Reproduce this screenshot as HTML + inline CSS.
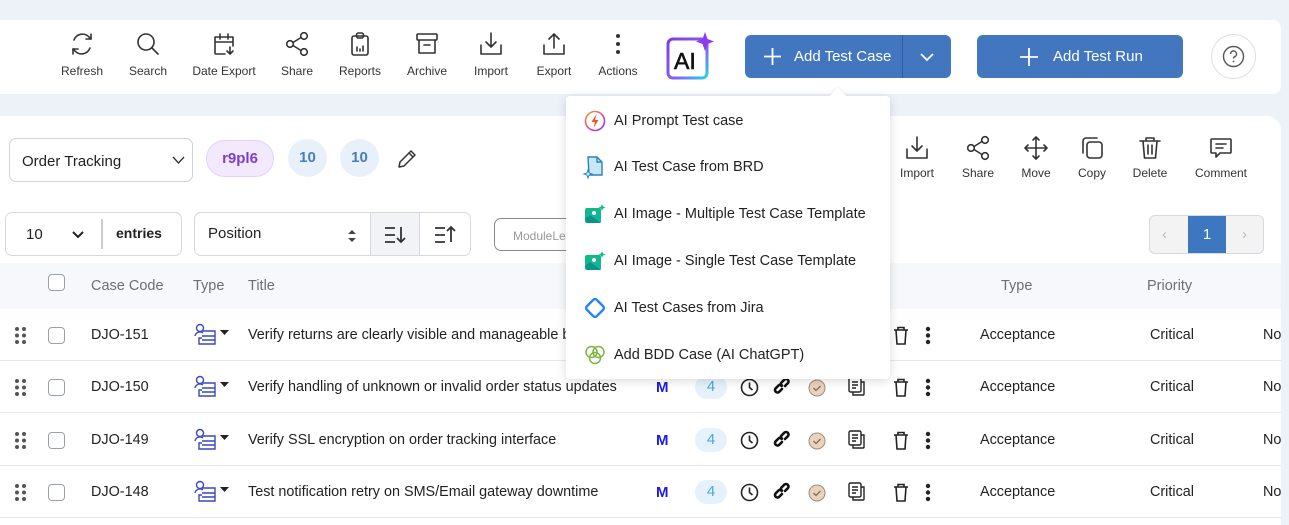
<!DOCTYPE html>
<html><head><meta charset="utf-8"><style>
*{box-sizing:border-box;margin:0;padding:0}
html,body{width:1289px;height:525px;overflow:hidden}
body{background:#edf2f9;font-family:"Liberation Sans",sans-serif;position:relative;color:#222}
.a{position:absolute}
.card{background:#fff}
.tb{position:absolute;top:30px;width:70px;text-align:center;font-size:12px;color:#333}
.tb svg{display:block;margin:0 auto 6px;width:26px;height:28px}
.rb{position:absolute;top:134px;width:64px;text-align:center;font-size:12px;color:#333}
.rb svg{display:block;margin:0 auto 4px;width:26px;height:28px}
svg{overflow:visible}
.ic{fill:none;stroke:#333;stroke-width:1.6;stroke-linecap:round;stroke-linejoin:round}
.row{position:absolute;left:0;width:1281px;height:52px;border-bottom:1px solid #e6e8ec;font-size:14.4px;color:#222}
.row>*{position:absolute}
.cb{width:17px;height:17px;border:1.3px solid #9aa0a8;border-radius:4px;background:#fff}
.mi{position:absolute;left:18px;font-size:14.5px;color:#222}
.mi svg{position:absolute;left:0;top:-3px;width:22px;height:22px}
.mi span{position:absolute;left:30px;white-space:nowrap}
</style></head><body>

<div class="a card" style="left:0;top:20px;width:1281px;height:74px;border-radius:0 8px 8px 0"></div>

<div class="tb" style="left:47px"><svg viewBox="0 0 26 28" class="ic"><path d="M5 10a9 9 0 0 1 15-3l2 2M21 18a9 9 0 0 1-15 3l-2-2"/><path d="M22 4v5h-5M4 24v-5h5"/></svg>Refresh</div>
<div class="tb" style="left:113px"><svg viewBox="0 0 26 28" class="ic"><circle cx="11" cy="12" r="8"/><path d="M17 18l6 6"/></svg>Search</div>
<div class="tb" style="left:189px"><svg viewBox="0 0 26 28" class="ic"><path d="M14 24H5a1 1 0 0 1-1-1V7h18v9M4 12h18M9 4v5M17 4v5"/><path d="M19 17v7M16 21l3 3 3-3"/></svg>Date Export</div>
<div class="tb" style="left:262px"><svg viewBox="0 0 26 28" class="ic"><circle cx="20" cy="6" r="3.3"/><circle cx="6" cy="14" r="3.3"/><circle cx="20" cy="22" r="3.3"/><path d="M9 12.5l8-5M9 15.5l8 5"/></svg>Share</div>
<div class="tb" style="left:325px"><svg viewBox="0 0 26 28" class="ic"><rect x="5" y="6" width="16" height="19" rx="2"/><rect x="9.5" y="3" width="7" height="5" rx="2"/><path d="M10 21v-4M13 21v-2M16 21v-5"/></svg>Reports</div>
<div class="tb" style="left:392px"><svg viewBox="0 0 26 28" class="ic"><rect x="3" y="4" width="20" height="6" rx="1"/><path d="M5 10v13h16V10M10 15h6"/></svg>Archive</div>
<div class="tb" style="left:456px"><svg viewBox="0 0 26 28" class="ic"><path d="M3 15v9h20v-9M13 3v14M8 12l5 5 5-5"/></svg>Import</div>
<div class="tb" style="left:519px"><svg viewBox="0 0 26 28" class="ic"><path d="M3 15v9h20v-9M13 18V4M8 9l5-5 5 5"/></svg>Export</div>
<div class="tb" style="left:583px"><svg viewBox="0 0 26 28"><circle cx="13" cy="6" r="2" fill="#333"/><circle cx="13" cy="14" r="2" fill="#333"/><circle cx="13" cy="22" r="2" fill="#333"/></svg>Actions</div>

<svg class="a" style="left:664px;top:32px" width="50" height="50" viewBox="0 0 50 50">
<defs><linearGradient id="g" x1="0" y1="0" x2="1" y2="1"><stop offset="0" stop-color="#7b3fe4"/><stop offset=".6" stop-color="#8b5cf6"/><stop offset="1" stop-color="#22d3ee"/></linearGradient></defs>
<rect x="4" y="7" width="39" height="39" rx="5" fill="none" stroke="url(#g)" stroke-width="3"/>
<text x="10" y="37" font-family="Liberation Sans" font-size="23" fill="#111" stroke="#111" stroke-width=".6">AI</text>
<path d="M41 0 L43.5 7 L50 9.5 L43.5 12 L41 19 L38.5 12 L32 9.5 L38.5 7Z" fill="#8b3cf0"/>
</svg>

<div class="a" style="left:745px;top:35px;width:206px;height:43px;background:#4277c0;border-radius:6px;color:#fff;font-size:15px">
 <svg class="a" style="left:19px;top:13px" width="17" height="17"><path d="M8.5 0v17M0 8.5h17" stroke="#fff" stroke-width="1.8"/></svg>
 <span class="a" style="left:49px;top:13px">Add Test Case</span>
 <div class="a" style="left:157px;top:0;width:1px;height:43px;background:#2f5d9c"></div>
 <svg class="a" style="left:174px;top:17px" width="16" height="10"><path d="M2 2l6 6 6-6" fill="none" stroke="#fff" stroke-width="1.8"/></svg>
</div>
<div class="a" style="left:977px;top:35px;width:206px;height:43px;background:#4277c0;border-radius:6px;color:#fff;font-size:15px">
 <svg class="a" style="left:43px;top:13px" width="18" height="18"><path d="M9 0v18M0 9h18" stroke="#fff" stroke-width="1.8"/></svg>
 <span class="a" style="left:76px;top:13px">Add Test Run</span>
</div>
<div class="a" style="left:1211px;top:34px;width:45px;height:45px;border:1px solid #dcdfe4;border-radius:50%;background:#fff"></div>
<svg class="a" style="left:1222px;top:45px" width="23" height="23" viewBox="0 0 23 23"><circle cx="11.5" cy="11.5" r="10" fill="none" stroke="#555" stroke-width="1.4"/><path d="M8.5 9a3 3 0 1 1 4 2.8c-.8.4-1 1-1 1.8" fill="none" stroke="#555" stroke-width="1.4"/><circle cx="11.5" cy="16.5" r=".9" fill="#555"/></svg>

<div class="a card" style="left:0;top:116px;width:1281px;height:409px;border-radius:0 14px 0 0"></div>

<div class="a" style="left:9px;top:138px;width:184px;height:44px;border:1px solid #cfd4da;border-radius:7px;font-size:15px"><span class="a" style="left:12px;top:14px">Order Tracking</span>
<svg class="a" style="left:162px;top:17px" width="13" height="9"><path d="M1 1l5.5 6L12 1" fill="none" stroke="#333" stroke-width="1.3"/></svg></div>
<div class="a" style="left:206px;top:140px;width:68px;height:37px;background:#f3e9fd;border:1px solid #e5d0fa;border-radius:19px;color:#7b3fc8;font-size:15px;text-align:center;line-height:35px;font-weight:bold">r9pl6</div>
<div class="a" style="left:288px;top:139px;width:39px;height:38px;background:#e8f0fa;border-radius:50%;color:#4a7cc0;font-size:15px;text-align:center;line-height:38px;font-weight:bold">10</div>
<div class="a" style="left:340px;top:139px;width:39px;height:38px;background:#e8f0fa;border-radius:50%;color:#4a7cc0;font-size:15px;text-align:center;line-height:38px;font-weight:bold">10</div>
<svg class="a" style="left:396px;top:148px" width="22" height="22" viewBox="0 0 22 22"><path d="M3 19l1-5L15 3l4 4L8 18z M13 5l4 4" fill="none" stroke="#333" stroke-width="1.5" stroke-linejoin="round"/></svg>

<div class="rb" style="left:885px"><svg viewBox="0 0 26 28" class="ic"><path d="M3 15v9h20v-9M13 3v14M8 12l5 5 5-5"/></svg>Import</div>
<div class="rb" style="left:946px"><svg viewBox="0 0 26 28" class="ic"><circle cx="20" cy="6" r="3.3"/><circle cx="6" cy="14" r="3.3"/><circle cx="20" cy="22" r="3.3"/><path d="M9 12.5l8-5M9 15.5l8 5"/></svg>Share</div>
<div class="rb" style="left:1004px"><svg viewBox="0 0 26 28" class="ic"><path d="M13 3v22M2 14h22M10 6l3-3 3 3M10 22l3 3 3-3M5 11l-3 3 3 3M21 11l3 3-3 3"/></svg>Move</div>
<div class="rb" style="left:1060px"><svg viewBox="0 0 26 28" class="ic"><rect x="8" y="8" width="15" height="16" rx="3"/><path d="M4 19V7a3 3 0 0 1 3-3h11"/></svg>Copy</div>
<div class="rb" style="left:1118px"><svg viewBox="0 0 26 28" class="ic"><path d="M3 7h20M9 7V4h8v3M6 7l1.5 17h11L20 7M11 11v9M15 11v9"/></svg>Delete</div>
<div class="rb" style="left:1189px"><svg viewBox="0 0 26 28" class="ic"><path d="M4 5h18a1 1 0 0 1 1 1v12a1 1 0 0 1-1 1H12l-4 4v-4H4a1 1 0 0 1-1-1V6a1 1 0 0 1 1-1zM8 10h10M8 14h7"/></svg>Comment</div>

<div class="a" style="left:5px;top:212px;width:177px;height:44px;border:1px solid #d5d9de;border-radius:7px;font-size:15px">
 <span class="a" style="left:20px;top:13px">10</span>
 <svg class="a" style="left:66px;top:18px" width="12" height="8"><path d="M1 1l5 5 5-5" fill="none" stroke="#222" stroke-width="2"/></svg>
 <div class="a" style="left:95px;top:6px;width:2px;height:30px;background:#ccc"></div>
 <span class="a" style="left:110px;top:12px;font-weight:bold;font-size:14px">entries</span>
</div>
<div class="a" style="left:194px;top:212px;width:277px;height:44px;border:1px solid #d5d9de;border-radius:7px;font-size:15px;overflow:hidden">
 <span class="a" style="left:13px;top:12px">Position</span>
 <svg class="a" style="left:152px;top:16px" width="10" height="14"><path d="M1 5l4-4 4 4zM1 9l4 4 4-4z" fill="#444"/></svg>
 <div class="a" style="left:175px;top:0;width:50px;height:44px;background:#f1f3f6;border-left:1px solid #d5d9de;border-right:1px solid #d5d9de"></div>
 <svg class="a" style="left:189px;top:12px" width="24" height="20"><path d="M1 3h10M1 10h10M1 17h10M17 2v15M13 13l4 4 4-4" fill="none" stroke="#333" stroke-width="1.8"/></svg>
 <svg class="a" style="left:239px;top:12px" width="24" height="20"><path d="M1 3h10M1 10h10M1 17h10M17 17V2M13 6l4-4 4 4" fill="none" stroke="#333" stroke-width="1.8"/></svg>
</div>
<div class="a" style="left:494px;top:218px;width:90px;height:33px;border:1px solid #888;border-radius:7px;font-size:12px;color:#999"><span class="a" style="left:18px;top:10px">ModuleLevel</span></div>

<div class="a" style="left:1149px;top:215px;width:115px;height:39px;border:1px solid #d5d9de;border-radius:6px;background:#f3f3f4;overflow:hidden">
 <span class="a" style="left:12px;top:10px;color:#bbb;font-size:15px">‹</span>
 <div class="a" style="left:38px;top:0;width:38px;height:39px;background:#3d77c0;color:#fff;font-size:15px;text-align:center;line-height:37px">1</div>
 <span class="a" style="left:92px;top:10px;color:#bbb;font-size:15px">›</span>
</div>

<div class="a" style="left:0;top:263px;width:1281px;height:46px;background:#f6f8fb"></div>
<div class="a cb" style="left:48px;top:274px"></div>
<div class="a" style="left:91px;top:278px;font-size:14.5px;color:#6b6f76">Case Code</div>
<div class="a" style="left:193px;top:278px;font-size:14.5px;color:#6b6f76">Type</div>
<div class="a" style="left:248px;top:278px;font-size:14.5px;color:#6b6f76">Title</div>
<div class="a" style="left:1001px;top:278px;font-size:14.5px;color:#6b6f76">Type</div>
<div class="a" style="left:1147px;top:278px;font-size:14.5px;color:#6b6f76">Priority</div>

<div id="rows"></div>
<script>
var data=[["DJO-151","Verify returns are clearly visible and manageable by users"],["DJO-150","Verify handling of unknown or invalid order status updates"],["DJO-149","Verify SSL encryption on order tracking interface"],["DJO-148","Test notification retry on SMS/Email gateway downtime"]];
var tops=[309,361,414,466],h="";
data.forEach(function(d,i){
h+='<div class="row" style="top:'+tops[i]+'px">'+
'<svg style="left:15px;top:18px" width="11" height="17"><g fill="#555"><circle cx="2" cy="2" r="2"/><circle cx="9" cy="2" r="2"/><circle cx="2" cy="8.5" r="2"/><circle cx="9" cy="8.5" r="2"/><circle cx="2" cy="15" r="2"/><circle cx="9" cy="15" r="2"/></g></svg>'+
'<div class="cb" style="left:48px;top:18px"></div>'+
'<span style="left:91px;top:18px">'+d[0]+'</span>'+
'<svg style="left:194px;top:14px" width="24" height="22" viewBox="0 0 24 22"><g fill="none" stroke="#3b47c4" stroke-width="1.4"><circle cx="6" cy="5" r="3.5"/><path d="M1 13a5 5 0 0 1 8-3M8 8h13v13H5v-6h3M8 13h13M8 17h13"/></g></svg>'+
'<svg style="left:220px;top:21px" width="9" height="6"><path d="M0 0h9L4.5 5z" fill="#222"/></svg>'+
'<span style="left:248px;top:18px;white-space:nowrap">'+d[1]+'</span>'+
'<span style="left:656px;top:18px;color:#1b1be6;font-weight:bold;font-size:15px">M</span>'+
'<div style="left:695px;top:14px;width:32px;height:24px;border-radius:12px;background:#e6f2fb;color:#49a6e0;font-size:15px;text-align:center;line-height:24px">4</div>'+
'<svg style="left:740px;top:17px" width="19" height="19"><circle cx="9.5" cy="9.5" r="8" fill="none" stroke="#222" stroke-width="1.6"/><path d="M9.5 4.5v5l3 2.5" fill="none" stroke="#222" stroke-width="1.6"/></svg>'+
'<svg style="left:774px;top:17px" width="19" height="19" viewBox="0 0 19 19"><g fill="none" stroke="#111" stroke-width="2.6" stroke-linecap="round"><path d="M8 11l-3 3a2.5 2.5 0 0 1-3.5-3.5l3-3a2.5 2.5 0 0 1 3.5 0"/><path d="M11 8l3-3a2.5 2.5 0 0 0-3.5-3.5l-3 3a2.5 2.5 0 0 0 0 3.5"/></g></svg>'+
'<svg style="left:808px;top:18px" width="18" height="18"><circle cx="9" cy="9" r="8" fill="#e8d3c1" stroke="#a88a70" stroke-width="1"/><path d="M5.5 9l2.5 2.5 4.5-4.5" fill="none" stroke="#8a6a50" stroke-width="1.3"/></svg>'+
'<svg style="left:848px;top:16px" width="18" height="20" viewBox="0 0 18 20"><g fill="none" stroke="#222" stroke-width="1.4"><rect x="1" y="1" width="12" height="14" rx="1.5"/><path d="M4 5h6M4 8h6M4 11h4M13 5h3v12a1 1 0 0 1-1 1H5v-3"/></g></svg>'+
'<svg style="left:893px;top:17px" width="16" height="19" viewBox="0 0 16 19"><g fill="none" stroke="#222" stroke-width="1.6"><path d="M1 4h14M5 4V1.5h6V4M3 4l1 14h8l1-14"/></g></svg>'+
'<svg style="left:925px;top:17px" width="6" height="19"><g fill="#222"><circle cx="3" cy="3" r="2.2"/><circle cx="3" cy="9.5" r="2.2"/><circle cx="3" cy="16" r="2.2"/></g></svg>'+
'<span style="left:980px;top:18px">Acceptance</span>'+
'<span style="left:1150px;top:18px">Critical</span>'+
'<span style="left:1263px;top:18px">No</span>'+
'</div>';});
document.getElementById("rows").innerHTML=h;
</script>

<div class="a" style="left:566px;top:96px;width:324px;height:283px;background:#fff;border-radius:4px;box-shadow:0 2px 10px rgba(0,0,0,.15)">
 <div class="a" style="left:266px;top:-6px;width:12px;height:12px;background:#fff;transform:rotate(45deg);box-shadow:-1px -1px 2px rgba(0,0,0,.06)"></div>
 <div class="mi" style="top:17px"><svg viewBox="0 0 22 22"><defs><linearGradient id="p" x1="0" y1="0" x2="1" y2="1"><stop offset="0" stop-color="#f59e0b"/><stop offset=".5" stop-color="#ec4899"/><stop offset="1" stop-color="#7c3aed"/></linearGradient></defs><circle cx="11" cy="11" r="9.5" fill="none" stroke="url(#p)" stroke-width="1.6"/><path d="M12.5 4L7.5 12h3.5l-1.5 6 5-8h-3.5z" fill="#f4511e"/></svg><span>AI Prompt Test case</span></div>
 <div class="mi" style="top:63px"><svg viewBox="0 0 22 22"><path d="M4 1h9l5 5v13H5z" fill="#c9e7f6" stroke="#2486b8" stroke-width="1.4"/><path d="M13 1v5h5" fill="none" stroke="#2486b8" stroke-width="1.4"/><path d="M4 14l1 3 3 1-3 1-1 3-1-3-3-1 3-1z" fill="#fff" stroke="#2486b8" stroke-width="1"/></svg><span>AI Test Case from BRD</span></div>
 <div class="mi" style="top:110px"><svg viewBox="0 0 22 22"><defs><linearGradient id="t" x1="0" y1="0" x2="0" y2="1"><stop offset="0" stop-color="#10b981"/><stop offset="1" stop-color="#14b8a6"/></linearGradient></defs><rect x="1" y="5" width="16" height="15" rx="2" fill="url(#t)"/><circle cx="10" cy="10" r="2" fill="#fff"/><path d="M1 16l5-4 11 8H3z" fill="#0d9488"/><path d="M18 1l1 2.5 2.5 1-2.5 1-1 2.5-1-2.5-2.5-1 2.5-1z" fill="#10b981"/></svg><span>AI Image - Multiple Test Case Template</span></div>
 <div class="mi" style="top:157px"><svg viewBox="0 0 22 22"><rect x="1" y="5" width="16" height="15" rx="2" fill="url(#t)"/><circle cx="10" cy="10" r="2" fill="#fff"/><path d="M1 16l5-4 11 8H3z" fill="#0d9488"/><path d="M18 1l1 2.5 2.5 1-2.5 1-1 2.5-1-2.5-2.5-1 2.5-1z" fill="#10b981"/></svg><span>AI Image - Single Test Case Template</span></div>
 <div class="mi" style="top:204px"><svg viewBox="0 0 22 22"><rect x="4" y="4" width="14" height="14" rx="2.5" transform="rotate(45 11 11)" fill="none" stroke="#2684ff" stroke-width="2.4"/></svg><span>AI Test Cases from Jira</span></div>
 <div class="mi" style="top:251px"><svg viewBox="0 0 22 22"><g fill="none" stroke="#7cb342" stroke-width="1.5"><circle cx="7.5" cy="8" r="5.5"/><circle cx="14.5" cy="8" r="5.5"/><circle cx="11" cy="14" r="5.5"/></g></svg><span>Add BDD Case (AI ChatGPT)</span></div>
</div>
</body></html>
